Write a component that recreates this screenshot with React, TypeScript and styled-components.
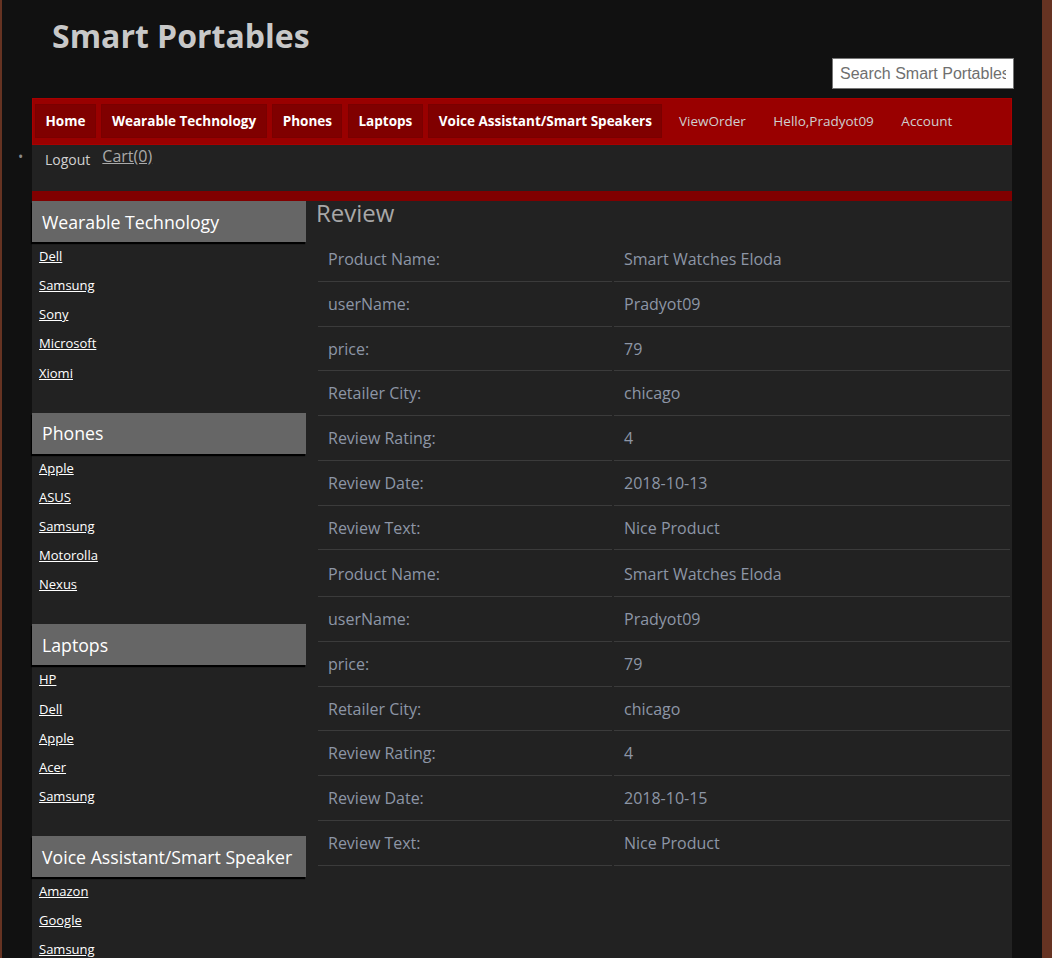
import * as React from 'react';
import styled, { createGlobalStyle } from 'styled-components';

const GlobalStyle = createGlobalStyle`
    html {
        background: #663322;
    }
    body {
        margin: 0;
        background: #663322;
        font-family: "Open Sans", "Liberation Sans", sans-serif;
    }
`;

const Page = styled.div`
    width: 1040px;
    min-height: 958px;
    margin-left: 2px;
    background: #111111;
    display: flex;
    flex-direction: column;
`;

const Header = styled.header`
    display: flex;
    flex-direction: column;
    padding: 19px 28px 0 50px;
`;

const Title = styled.h1`
    margin: 0;
    font-size: 32px;
    line-height: 33px;
    font-weight: 700;
    color: #c8c8c8;
`;

const SearchRow = styled.div`
    display: flex;
    justify-content: flex-end;
    margin: 6px 0 9px;
`;

const SearchInput = styled.input`
    box-sizing: border-box;
    width: 182px;
    height: 31px;
    border: 1px solid #767676;
    background: #ffffff;
    padding: 0 7px;
    font-family: "Liberation Sans", Arial, sans-serif;
    font-size: 16px;
    color: #333;
    outline: none;
    &::placeholder {
        color: #6f6f6f;
    }
`;

const Frame = styled.div`
    width: 980px;
    margin-left: 30px;
    background: #222222;
    display: flex;
    flex-direction: column;
    flex: 1;
`;

const NavBar = styled.nav`
    box-sizing: border-box;
    height: 47px;
    background: #990000;
    border: 1px solid #a80000;
    display: flex;
    align-items: center;
    gap: 5.5px;
    padding: 0 0 1px 2px;
`;

const NavButton = styled.a<{ $active?: boolean }>`
    display: flex;
    align-items: center;
    height: 34px;
    padding: 0 ${(p) => (p.$active ? 9.5 : 10)}px;
    box-sizing: border-box;
    background: ${(p) => (p.$active ? '#800000' : 'transparent')};
    border: ${(p) => (p.$active ? '1px solid #7a0000' : '1px solid transparent')};
    font-size: 13.5px;
    font-weight: ${(p) => (p.$active ? 700 : 400)};
    color: ${(p) => (p.$active ? '#ffffff' : '#cfcfcf')};
    text-decoration: none;
    white-space: nowrap;
`;

const SubBar = styled.div`
    height: 46px;
    display: flex;
    align-items: flex-start;
    padding-left: 13px;
`;

const SubItem = styled.div`
    padding-top: 5px;
    font-size: 14px;
    color: #d0d0d0;
    &::before {
        content: "•";
        display: inline-block;
        width: 27px;
        margin-left: -27px;
        position: relative;
        top: -3px;
        font-size: 14px;
        color: #8a8a8a;
    }
`;

const CartLink = styled.a`
    margin-left: 12px;
    font-size: 16px;
    line-height: 22px;
    color: #aaaaaa;
    text-decoration: underline;
`;

const RedStrip = styled.div`
    height: 10px;
    background: #800000;
`;

const Body = styled.div`
    display: flex;
    align-items: flex-start;
`;

const Sidebar = styled.aside`
    width: 274px;
    flex-shrink: 0;
    display: flex;
    flex-direction: column;
    gap: 25px;
`;

const SideSection = styled.section`
    display: flex;
    flex-direction: column;
`;

const SideHeading = styled.h3`
    margin: 0;
    height: 41px;
    display: flex;
    align-items: center;
    padding-left: 10px;
    background: #666666;
    box-shadow: -1px 2px 1px #000000;
    font-size: 17.7px;
    font-weight: 400;
    color: #ffffff;
    white-space: nowrap;
`;

const SideList = styled.ul`
    list-style: none;
    margin: 0;
    padding: 0 0 0 7px;
`;

const SideItem = styled.li`
    height: 29.15px;
    display: flex;
    align-items: center;
    padding-bottom: 1px;
    box-sizing: border-box;
`;

const SideLink = styled.a`
    font-size: 13px;
    color: #ffffff;
    text-decoration: underline;
`;

const Main = styled.main`
    flex: 1;
    padding-left: 10px;
`;

const ReviewTitle = styled.h2`
    margin: 0 0 12px;
    font-size: 24px;
    line-height: 24px;
    font-weight: 400;
    color: #a8a8a8;
`;

const ReviewTable = styled.table`
    width: 100%;
    border-spacing: 2px;
`;

const Cell = styled.td<{ $label?: boolean }>`
    width: ${(p) => (p.$label ? '274px' : 'auto')};
    padding: 10px;
    line-height: 21.75px;
    border-bottom: 1px solid #3b3b3b;
    font-size: 16px;
    color: #8d96a6;
`;

const sections = [
    { title: 'Wearable Technology', items: ['Dell', 'Samsung', 'Sony', 'Microsoft', 'Xiomi'] },
    { title: 'Phones', items: ['Apple', 'ASUS', 'Samsung', 'Motorolla', 'Nexus'] },
    { title: 'Laptops', items: ['HP', 'Dell', 'Apple', 'Acer', 'Samsung'] },
    { title: 'Voice Assistant/Smart Speaker', items: ['Amazon', 'Google', 'Samsung'] },
];

const reviews = [
    { product: 'Smart Watches Eloda', user: 'Pradyot09', price: '79', city: 'chicago', rating: '4', date: '2018-10-13', text: 'Nice Product' },
    { product: 'Smart Watches Eloda', user: 'Pradyot09', price: '79', city: 'chicago', rating: '4', date: '2018-10-15', text: 'Nice Product' },
];

const App = () => {
    const navButtons = ['Home', 'Wearable Technology', 'Phones', 'Laptops', 'Voice Assistant/Smart Speakers'];
    const navLinks = ['ViewOrder', 'Hello,Pradyot09', 'Account'];

    return (
        <Page>
            <GlobalStyle />
            <Header>
                <Title>Smart Portables</Title>
                <SearchRow>
                    <SearchInput placeholder="Search Smart Portables" />
                </SearchRow>
            </Header>
            <Frame>
                <NavBar>
                    {navButtons.map((label) => <NavButton key={label} $active>{label}</NavButton>)}
                    {navLinks.map((label) => <NavButton key={label}>{label}</NavButton>)}
                </NavBar>
                <SubBar>
                    <SubItem>Logout</SubItem>
                    <CartLink>Cart(0)</CartLink>
                </SubBar>
                <RedStrip />
                <Body>
                    <Sidebar>
                        {sections.map((section) => (
                            <SideSection key={section.title}>
                                <SideHeading>{section.title}</SideHeading>
                                <SideList>
                                    {section.items.map((item) => (
                                        <SideItem key={item}><SideLink>{item}</SideLink></SideItem>
                                    ))}
                                </SideList>
                            </SideSection>
                        ))}
                    </Sidebar>
                    <Main>
                        <ReviewTitle>Review</ReviewTitle>
                        {reviews.map((r, i) => {
                            const rows = [
                                ['Product Name:', r.product],
                                ['userName:', r.user],
                                ['price:', r.price],
                                ['Retailer City:', r.city],
                                ['Review Rating:', r.rating],
                                ['Review Date:', r.date],
                                ['Review Text:', r.text],
                            ];
                            return (
                                <ReviewTable key={i}>
                                    <tbody>
                                        {rows.map(([k, v]) => (
                                            <tr key={k}>
                                                <Cell $label>{k}</Cell>
                                                <Cell>{v}</Cell>
                                            </tr>
                                        ))}
                                    </tbody>
                                </ReviewTable>
                            );
                        })}
                    </Main>
                </Body>
            </Frame>
        </Page>
    );
};

export default App;
